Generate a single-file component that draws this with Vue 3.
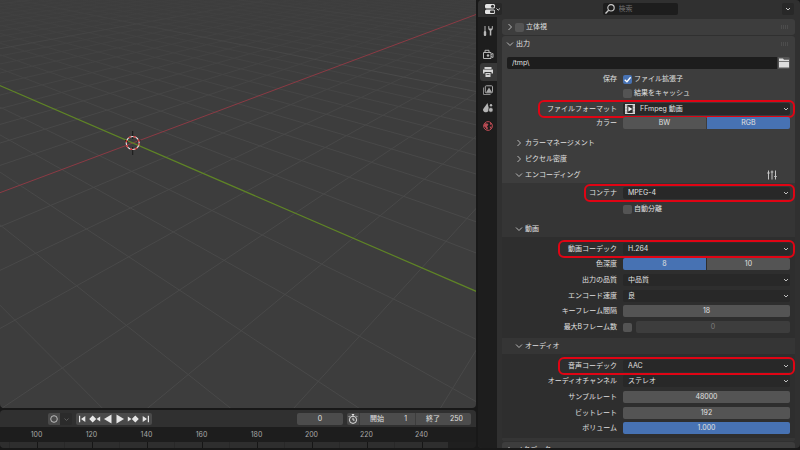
<script setup>
import { ref } from 'vue'

// Ground plane to screen projection
const project = (x, y) => {
  const w = 0.05185 * x + 0.05988 * y + 1
  return [(38.63 * x - 22.93 * y + 132.7) / w, (-4.47 * x - 4.77 * y + 143) / w]
}
const G = 0.05185
const H = 0.05988
const gridLine = (axis, n) => {
  const [fixed, free] = axis === 'x' ? [G, H] : [H, G]
  const from = (-0.85 - fixed * n) / free
  const a = axis === 'x' ? project(n, from) : project(from, n)
  const b = axis === 'x' ? project(n, from + 130) : project(from + 130, n)
  return {
    key: axis + n,
    x1: a[0], y1: a[1], x2: b[0], y2: b[1],
    kind: n === 0 ? (axis === 'x' ? 'green' : 'red') : n % 10 === 0 ? 'major' : 'minor',
  }
}
const lines = []
for (let n = -12; n <= 40; n++) {
  if (n !== 0) lines.push(gridLine('x', n), gridLine('y', n))
}
lines.push(gridLine('y', 0), gridLine('x', 0))

const marks = [100, 120, 140, 160, 180, 200, 220, 240]
const search = ref('')
const path = ref('/tmp\\')
const extensions = ref(true)
const cache = ref(false)
const stereo = ref(false)
const autosplit = ref(false)
const useBFrames = ref(false)
const color = ref('RGB')
const depth = ref('8')
const frame = ref('0')
const start = ref('1')
const end = ref('250')
const keyframe = ref('18')
const bframes = ref('0')
const sampleRate = ref('48000')
const bitrate = ref('192')
const volume = ref('1.000')
</script>

<template>
  <div class="app">
    <div class="left">
      <main class="viewport">
        <svg class="scene" viewBox="0 0 476 408" preserveAspectRatio="xMinYMin slice" aria-hidden="true">
          <defs>
            <linearGradient id="fade" x1="0" y1="0" x2="0" y2="1">
              <stop offset="0" stop-color="#3d3d3d" stop-opacity="0.85" />
              <stop offset="0.3" stop-color="#3d3d3d" stop-opacity="0.1" />
              <stop offset="0.5" stop-color="#3d3d3d" stop-opacity="0" />
            </linearGradient>
          </defs>
          <line v-for="l in lines.slice(0, -2)" :key="l.key" :class="l.kind" :x1="l.x1" :y1="l.y1" :x2="l.x2" :y2="l.y2" />
          <rect width="476" height="408" fill="url(#fade)" />
          <line v-for="l in lines.slice(-2)" :key="l.key" :class="l.kind" :x1="l.x1" :y1="l.y1" :x2="l.x2" :y2="l.y2" />
          <path d="M132.700 131v8M132.700 147v8M125 140.500l3 1M137.500 141.500l3-1" stroke="#161616" stroke-width="0.900" />
          <circle cx="132.700" cy="143" r="6.500" fill="none" stroke="#e8e8e8" stroke-width="1.100" />
          <circle cx="132.700" cy="143" r="6.500" fill="none" stroke="#d02c2c" stroke-width="1.200" stroke-dasharray="2.550 2.550" />
        </svg>
      </main>

      <section class="timeline">
        <div class="tl-bar">
          <div class="record">
            <button class="tb" aria-label="自動キー"><svg viewBox="0 0 12 12"><circle cx="6" cy="6" r="3.300" fill="none" stroke="#c8c8c8" stroke-width="0.900" /></svg></button>
            <button class="tb dark" aria-label="キー設定"><svg viewBox="0 0 12 12"><path d="M4.500 5.500L6.500 7.500L8.500 5.500" fill="none" stroke="#5c5c5c" /></svg></button>
          </div>
          <div class="transport">
            <button class="tb" aria-label="先頭"><svg viewBox="0 0 12 12"><path d="M3 2.800h1.200v6.400h-1.200zM9.300 3v6L5 6z" /></svg></button>
            <button class="tb" aria-label="前のキー"><svg viewBox="0 0 12 12"><path d="M3.700 2.500L7.200 6L3.700 9.500L0.200 6zM11.200 3.500v5L7.500 6z" /></svg></button>
            <button class="tb" aria-label="逆再生"><svg viewBox="0 0 12 12"><path d="M9.500 1.600v8.800L2 6z" /></svg></button>
            <button class="tb" aria-label="再生"><svg viewBox="0 0 12 12"><path d="M2.500 1.600v8.800L10 6z" /></svg></button>
            <button class="tb" aria-label="次のキー"><svg viewBox="0 0 12 12"><path d="M8.300 2.500L11.800 6L8.300 9.500L4.800 6zM0.800 3.500v5L4.500 6z" /></svg></button>
            <button class="tb" aria-label="末尾"><svg viewBox="0 0 12 12"><path d="M7.800 2.800h1.200v6.400h-1.200zM2.700 3v6L7 6z" /></svg></button>
          </div>
          <input v-model="frame" class="frame" aria-label="フレーム" />
          <div class="range">
            <button class="tb" aria-label="プレビュー範囲"><svg viewBox="0 0 12 12"><g fill="none" stroke="#e0e0e0"><circle cx="6" cy="6.800" r="3.600" /><path d="M6 4.800v2.300h1.600M4.800 1.500h2.400M6 1.500v1.500M9.200 2.800l1 1M2.800 2.800l-1 1" /></g></svg></button>
            <label class="pair"><span>開始</span><input v-model="start" /></label>
            <label class="pair last"><span>終了</span><input v-model="end" /></label>
          </div>
        </div>
        <div class="ruler"><span v-for="m in marks" :key="m">{{ m }}</span></div>
        <div class="track"><i v-for="m in marks" :key="m"></i></div>
      </section>
    </div>

    <aside class="props">
      <header class="head">
        <button class="editor" aria-label="エディタータイプ">
          <svg viewBox="0 0 17 12"><rect x="1" y="1" width="10" height="4.500" rx="1.500" fill="#e4e4e4" /><circle cx="8.500" cy="3.200" r="1.500" fill="#303030" /><rect x="1" y="6.500" width="10" height="4.500" rx="1.500" fill="#e4e4e4" /><rect x="6" y="7.400" width="4.300" height="2.700" rx="1" fill="#303030" /><path d="M12.500 5.500l1.700 1.700L15.900 5.500" fill="none" stroke="#d8d8d8" /></svg>
        </button>
        <label class="search">
          <svg viewBox="0 0 12 12"><circle cx="7" cy="4.800" r="3.200" fill="none" stroke="#ccc" stroke-width="1.100" /><path d="M4.600 7.200L1.500 10.500" stroke="#ccc" stroke-width="1.300" /></svg>
          <input v-model="search" placeholder="検索" aria-label="検索" />
        </label>
        <button class="opts" aria-label="オプション"><svg viewBox="0 0 12 12"><path d="M4 5l2 2L8 5" fill="none" stroke="#c8c8c8" /></svg></button>
      </header>

      <div class="body">
        <nav class="tabs">
          <button class="tab tool" aria-label="ツール"><svg viewBox="0 0 12 12"><path d="M3 1v5" stroke="#b8b8b8" stroke-width="1" /><rect x="1.800" y="6" width="2.400" height="5" rx="1" fill="#b8b8b8" /><path d="M6.300 1v2.400c0 1 .8 1.700 1.500 2V10.500h1.500V5.400c.7-.3 1.500-1 1.500-2V1l-1 .3v2.200h-2.500V1.300z" fill="#b8b8b8" /></svg></button>
          <button class="tab" aria-label="レンダー"><svg viewBox="0 0 12 12"><path d="M1.500 4.500h7.500v6h-7.500zM3 4.500V2.300h4v2.200M9 6.500l2-1v4l-2-1" fill="none" stroke="#b4b4b4" /><circle cx="6" cy="7.500" r="1.200" fill="#b4b4b4" /></svg></button>
          <button class="tab active" aria-label="出力"><svg viewBox="0 0 12 12"><path d="M2.500 1h7v2h-7zM1 3.500h10v4H9.500V6h-7v1.500H1zM3.500 7h5v4h-5z" fill="#d4d4d4" /><path d="M4.500 8.500h3" stroke="#444" stroke-width="0.800" /></svg></button>
          <button class="tab" aria-label="ビューレイヤー"><svg viewBox="0 0 12 12"><path d="M1.500 3.500v7h7" fill="none" stroke="#888" /><rect x="3.300" y="1.800" width="7.200" height="7" rx="1" fill="none" stroke="#a8a8a8" /><path d="M4 8.500l3-5 3.300 5z" fill="#a8a8a8" /></svg></button>
          <button class="tab" aria-label="シーン"><svg viewBox="0 0 12 12"><path d="M5.500 1L6.800 6.200C7.300 8.300 6 10.300 4 10.300C1.500 10.300 .4 8.300 1.400 6.800z" fill="#b4b4b4" /><circle cx="8.800" cy="7.900" r="2.300" fill="#b4b4b4" stroke="#1d1d1d" stroke-width=".6" /><circle cx="9" cy="3.200" r="1.200" fill="#b4b4b4" /></svg></button>
          <button class="tab" aria-label="ワールド"><svg viewBox="0 0 12 12"><circle cx="6" cy="6" r="4.400" fill="none" stroke="#b84a52" /><path d="M2.500 3.200l3 .2 1 1.300-1.500 1.500L6 8l-1 2-1.500-2.500L1.700 6zM8 2l2 2.300-1.800.7zM7.500 6.500l2.500.3L8.500 9z" fill="#b84a52" /></svg></button>
        </nav>

        <div class="panels">
          <section class="panel">
            <div class="title">
              <button class="fold" aria-label="立体視"><svg viewBox="0 0 8 8"><path d="M2.500 1l3 3-3 3" /></svg></button>
              <label class="check"><span class="tick"><input v-model="stereo" type="checkbox" /></span>立体視</label>
              <svg class="grip" viewBox="0 0 8 4"><path d="M0 1h8M0 3h8" /></svg>
            </div>
          </section>

          <section class="panel">
            <div class="title">
              <button class="fold"><svg viewBox="0 0 8 8"><path d="M1 2.500l3 3 3-3" /></svg>出力</button>
              <svg class="grip" viewBox="0 0 8 4"><path d="M0 1h8M0 3h8" /></svg>
            </div>
            <div class="path">
              <input v-model="path" aria-label="出力パス" />
              <button aria-label="参照"><svg viewBox="0 0 12 12"><path d="M1 1.500h4l1 1.300h5V4H1zM1 4.700h10V10.500H1z" fill="#dedede" /></svg></button>
            </div>
            <div class="row check-row">
              <span class="name">保存</span>
              <label class="check"><span class="tick"><input v-model="extensions" type="checkbox" /><svg v-if="extensions" viewBox="0 0 8 8"><path d="M1.500 4.200l2 1.800L6.800 2" /></svg></span>ファイル拡張子</label>
            </div>
            <div class="row check-row">
              <span class="name"></span>
              <label class="check"><span class="tick"><input v-model="cache" type="checkbox" /></span>結果をキャッシュ</label>
            </div>
            <div class="row marked wide">
              <label class="name" for="format">ファイルフォーマット</label>
              <div class="drop film">
                <svg class="clip" viewBox="0 0 10 10"><path d="M0 0h10v10H0z" fill="#d8d8d8" /><path d="M2.300 1h5.400v8H2.300z" fill="#2c2c2c" /><path d="M3.400 2.500l3.900 2.500-3.900 2.500z" fill="#f4f4f4" /><path d="M.6 2h1M.6 5h1M.6 8h1M8.400 2h1M8.400 5h1M8.400 8h1" stroke="#777" /></svg>
                <select id="format"><option>FFmpeg 動画</option></select>
                <svg class="arrow" viewBox="0 0 8 8"><path d="M2 3l2 2 2-2" /></svg>
              </div>
            </div>
            <div class="row flat">
              <span class="name">カラー</span>
              <div class="seg">
                <button v-for="c in ['BW', 'RGB']" :key="c" :class="{ on: color === c }" :aria-pressed="color === c" @click="color = c">{{ c }}</button>
              </div>
            </div>

            <div class="subs">
              <div class="title sub"><button class="fold"><svg viewBox="0 0 8 8"><path d="M2.500 1l3 3-3 3" /></svg>カラーマネージメント</button></div>
              <div class="title sub"><button class="fold"><svg viewBox="0 0 8 8"><path d="M2.500 1l3 3-3 3" /></svg>ピクセル密度</button></div>
              <div class="title sub">
                <button class="fold"><svg viewBox="0 0 8 8"><path d="M1 2.500l3 3 3-3" /></svg>エンコーディング</button>
                <button class="preset" aria-label="プリセット"><svg viewBox="0 0 12 12"><path d="M2.500 1.500v9M6 1.500v9M9.500 1.500v9M1.200 4h2.600M4.700 3h2.600M8.200 7.500h2.600" fill="none" stroke="#c4c4c4" /></svg></button>
              </div>
            </div>

            <div class="deep">
              <div class="row marked mid">
                <label class="name" for="container">コンテナ</label>
                <div class="drop"><select id="container"><option>MPEG-4</option></select><svg class="arrow" viewBox="0 0 8 8"><path d="M2 3l2 2 2-2" /></svg></div>
              </div>
              <div class="row">
                <span class="name"></span>
                <label class="check"><span class="tick"><input v-model="autosplit" type="checkbox" /></span>自動分離</label>
              </div>
              <div class="title sub spaced"><button class="fold"><svg viewBox="0 0 8 8"><path d="M1 2.500l3 3 3-3" /></svg>動画</button></div>

              <div class="deeper video">
                <div class="row marked">
                  <label class="name" for="vcodec">動画コーデック</label>
                  <div class="drop"><select id="vcodec"><option>H.264</option></select><svg class="arrow" viewBox="0 0 8 8"><path d="M2 3l2 2 2-2" /></svg></div>
                </div>
                <div class="row">
                  <span class="name">色深度</span>
                  <div class="seg">
                    <button v-for="d in ['8', '10']" :key="d" :class="{ on: depth === d }" :aria-pressed="depth === d" @click="depth = d">{{ d }}</button>
                  </div>
                </div>
                <div class="row">
                  <label class="name" for="quality">出力の品質</label>
                  <div class="drop"><select id="quality"><option>中品質</option></select><svg class="arrow" viewBox="0 0 8 8"><path d="M2 3l2 2 2-2" /></svg></div>
                </div>
                <div class="row">
                  <label class="name" for="speed">エンコード速度</label>
                  <div class="drop"><select id="speed"><option>良</option></select><svg class="arrow" viewBox="0 0 8 8"><path d="M2 3l2 2 2-2" /></svg></div>
                </div>
                <div class="row">
                  <label class="name" for="keyframe">キーフレーム間隔</label>
                  <input id="keyframe" v-model="keyframe" class="num" />
                </div>
                <div class="row">
                  <label class="name" for="bframes">最大Bフレーム数</label>
                  <div class="combo">
                    <span class="tick"><input v-model="useBFrames" type="checkbox" aria-label="最大Bフレーム数を使用" /></span>
                    <input id="bframes" v-model="bframes" class="num" :disabled="!useBFrames" />
                  </div>
                </div>
              </div>

              <div class="title sub"><button class="fold"><svg viewBox="0 0 8 8"><path d="M1 2.500l3 3 3-3" /></svg>オーディオ</button></div>
              <div class="deeper audio">
                <div class="row marked">
                  <label class="name" for="acodec">音声コーデック</label>
                  <div class="drop"><select id="acodec"><option>AAC</option></select><svg class="arrow" viewBox="0 0 8 8"><path d="M2 3l2 2 2-2" /></svg></div>
                </div>
                <div class="row">
                  <label class="name" for="channels">オーディオチャンネル</label>
                  <div class="drop"><select id="channels"><option>ステレオ</option></select><svg class="arrow" viewBox="0 0 8 8"><path d="M2 3l2 2 2-2" /></svg></div>
                </div>
                <div class="row">
                  <label class="name" for="rate">サンプルレート</label>
                  <input id="rate" v-model="sampleRate" class="num" />
                </div>
                <div class="row">
                  <label class="name" for="bitrate">ビットレート</label>
                  <input id="bitrate" v-model="bitrate" class="num" />
                </div>
                <div class="row">
                  <label class="name" for="volume">ボリューム</label>
                  <input id="volume" v-model="volume" class="num full" />
                </div>
              </div>
            </div>
          </section>

          <section class="panel">
            <div class="title">
              <button class="fold"><svg viewBox="0 0 8 8"><path d="M2.500 1l3 3-3 3" /></svg>メタデータ</button>
              <svg class="grip" viewBox="0 0 8 4"><path d="M0 1h8M0 3h8" /></svg>
            </div>
          </section>
        </div>
      </div>
    </aside>
  </div>
</template>

<style>
body {
  background: #181818;
  overflow: hidden;
}
</style>

<style scoped>
* {
  box-sizing: border-box;
}
.app {
  display: grid;
  grid-template-columns: minmax(0, 1fr) 322px;
  gap: 2px;
  height: 100vh;
  padding-bottom: 2px;
  background: #181818;
  color: #e0e0e0;
  font: 7px/12px Inter, "Noto Sans CJK JP", sans-serif;
}
button,
input,
select {
  font: inherit;
  color: inherit;
  margin: 0;
  padding: 0;
  border: 0;
  background: none;
  min-width: 0;
}
svg {
  display: block;
}

/* 3D view */
.left {
  display: flex;
  flex-direction: column;
  gap: 2px;
  min-width: 0;
}
.viewport {
  flex: 1;
  min-height: 0;
  overflow: hidden;
  border-radius: 0 0 4px 4px;
  background: #3d3d3d;
}
.scene {
  width: 100%;
  height: 100%;
}
.minor {
  stroke: #494949;
}
.major {
  stroke: #525252;
}
.red {
  stroke: #8b3a44;
}
.green {
  stroke: #5f8426;
  stroke-width: 1.2;
}

/* Timeline */
.timeline {
  overflow: hidden;
  border-radius: 4px;
  background: #1d1d1d;
}
.tl-bar {
  display: flex;
  align-items: center;
  height: 17px;
  padding: 0 5px 0 48px;
  background: #303030;
}
.record,
.transport,
.range {
  display: flex;
  height: 12px;
  overflow: hidden;
  border-radius: 2px;
}
.transport {
  width: 76px;
  margin-left: 4px;
}
.transport .tb {
  flex: 1;
}
.tb {
  width: 12px;
  height: 12px;
  background: #4a4a4a;
  fill: #e6e6e6;
}
.tb svg {
  width: 12px;
  height: 12px;
  margin: 0 auto;
}
.tb.dark {
  background: #2b2b2b;
}
.frame {
  width: 46px;
  height: 12px;
  margin-left: auto;
  border-radius: 2px;
  background: #4c4c4c;
  text-align: center;
}
.range {
  margin-left: 4px;
}
.pair {
  display: flex;
  justify-content: space-between;
  width: 56px;
  padding: 0 8px 0 10px;
  border-left: 1px solid #3d3d3d;
  background: #4c4c4c;
}
.pair input {
  width: 20px;
  text-align: right;
}
.ruler {
  display: flex;
  height: 15px;
  padding-left: 9px;
  line-height: 16px;
  color: #a8a8a8;
}
.ruler span {
  flex: 0 0 55px;
  text-align: center;
}
.track {
  display: flex;
  height: 6px;
  padding-left: 9px;
  background: linear-gradient(90deg, #2e2e2e 448px, #1f1f1f 448px);
}
.track i {
  flex: 0 0 55px;
  border-left: 1px solid #282828;
}
.track i::before {
  content: "";
  display: block;
  width: 1px;
  height: 6px;
  margin: 0 auto;
  background: #161616;
}

/* Properties editor */
.props {
  display: flex;
  flex-direction: column;
  min-width: 0;
  min-height: 0;
  overflow: hidden;
  border-radius: 4px;
  background: #303030;
}
.head {
  display: flex;
  align-items: center;
  justify-content: space-between;
  height: 17px;
  padding: 0 6px;
}
.editor {
  width: 18px;
  height: 12px;
  border-radius: 2px;
  background: #282828;
}
.editor svg {
  width: 17px;
  height: 12px;
}
.search {
  display: flex;
  align-items: center;
  width: 75px;
  height: 12px;
  margin-right: 4px;
  padding-left: 1px;
  border-radius: 2px;
  background: #1d1d1d;
}
.search svg {
  flex: none;
  width: 12px;
  height: 12px;
}
.search input {
  flex: 1;
  height: 12px;
  padding-left: 3px;
}
.search input::placeholder {
  color: #707070;
  opacity: 1;
}
.opts {
  width: 12px;
  height: 12px;
  border-radius: 2px;
  background: #282828;
}
.body {
  display: flex;
  flex: 1;
  min-height: 0;
}
.tabs {
  display: flex;
  flex: 0 0 19px;
  flex-direction: column;
  padding: 5px 0 0 2px;
  background: #1d1d1d;
}
.tab {
  flex: none;
  height: 18px;
  padding: 3px 2px;
  border-radius: 3px 0 0 3px;
}
.tab svg {
  width: 12px;
  height: 12px;
}
.tab.tool {
  margin-bottom: 5px;
}
.tab.active {
  background: #383838;
}
.panels {
  flex: 1;
  min-width: 0;
  overflow: hidden;
  padding: 2px 5px 0;
}
.panel {
  margin-bottom: 1px;
  border-radius: 3px;
  background: #3d3d3d;
}
.title {
  display: flex;
  align-items: center;
  height: 16px;
  padding: 0 6px 0 4px;
}
.fold {
  display: flex;
  align-items: center;
  gap: 2px;
  height: 12px;
}
.fold svg {
  width: 8px;
  height: 8px;
  fill: none;
  stroke: #b8b8b8;
}
.grip {
  width: 8px;
  height: 4px;
  margin-left: auto;
  stroke: #5c5c5c;
  stroke-dasharray: 1 1;
}
.sub {
  padding: 0 17px 0 13px;
}
.preset {
  width: 12px;
  height: 12px;
  margin-left: auto;
}
.check {
  display: flex;
  align-items: center;
  gap: 2px;
}
.fold + .check {
  margin-left: 1px;
}
.tick {
  position: relative;
  flex: none;
  width: 9px;
  height: 9px;
}
.tick input {
  display: block;
  width: 9px;
  height: 9px;
  appearance: none;
  border-radius: 2px;
  background: #545454;
}
.tick input:checked {
  background: #4772b3;
}
.tick svg {
  position: absolute;
  inset: 0;
  pointer-events: none;
  fill: none;
  stroke: #fff;
  stroke-width: 1.2;
}
.path {
  display: flex;
  gap: 1px;
  margin: 5px 5px 3px;
}
.path input {
  flex: 1;
  height: 12px;
  padding-left: 5px;
  border-radius: 2px 0 0 2px;
  background: #1d1d1d;
}
.path button {
  width: 12px;
  height: 12px;
  border-radius: 0 2px 2px 0;
  background: #545454;
}
.row {
  position: relative;
  display: grid;
  grid-template-columns: 115px minmax(0, 1fr);
  gap: 6px;
  align-items: center;
  height: 16px;
  padding-right: 5px;
}
.check-row {
  height: 14px;
}
.wide {
  margin-top: 1px;
}
.flat {
  height: 12px;
}
.name {
  text-align: right;
  white-space: nowrap;
}
.marked::after {
  content: "";
  position: absolute;
  inset: -1px 0 -1px 56px;
  border: 2px solid #e00414;
  border-radius: 6px;
  pointer-events: none;
}
.marked.wide::after {
  left: 36px;
}
.marked.mid::after {
  left: 82px;
}
.drop {
  position: relative;
}
.drop select {
  display: block;
  width: 100%;
  height: 12px;
  padding-left: 5px;
  appearance: none;
  border-radius: 2px;
  background: #282828;
}
.drop.film select {
  padding-left: 17px;
}
.clip {
  position: absolute;
  left: 2px;
  top: 1px;
  width: 10px;
  height: 10px;
}
.arrow {
  position: absolute;
  right: 0;
  top: 2px;
  width: 8px;
  height: 8px;
  fill: none;
  stroke: #c0c0c0;
  pointer-events: none;
}
.seg {
  display: grid;
  grid-template-columns: 1fr 1fr;
  gap: 1px;
  overflow: hidden;
  border-radius: 2px;
}
.seg button {
  height: 12px;
  background: #545454;
}
.seg .on {
  background: #4772b3;
}
.num {
  width: 100%;
  height: 12px;
  border-radius: 2px;
  background: #545454;
  text-align: center;
}
.num:disabled {
  background: #3d3d3d;
  color: #7c7c7c;
}
.num.full {
  background: #4772b3;
}
.combo {
  display: flex;
  align-items: center;
  gap: 4px;
}
.subs {
  padding-top: 6px;
}
.deep {
  padding: 2px 0 3px;
  border-radius: 0 0 3px 3px;
  background: #353535;
}
.spaced {
  margin-top: 4px;
}
.deeper {
  display: grid;
  grid-auto-rows: 1fr;
  padding: 4px 0;
  background: #2e2e2e;
}
.deeper .row {
  height: auto;
}
.video {
  height: 101px;
  padding-bottom: 3px;
}
.audio {
  height: 84px;
  padding-bottom: 2px;
}
</style>
